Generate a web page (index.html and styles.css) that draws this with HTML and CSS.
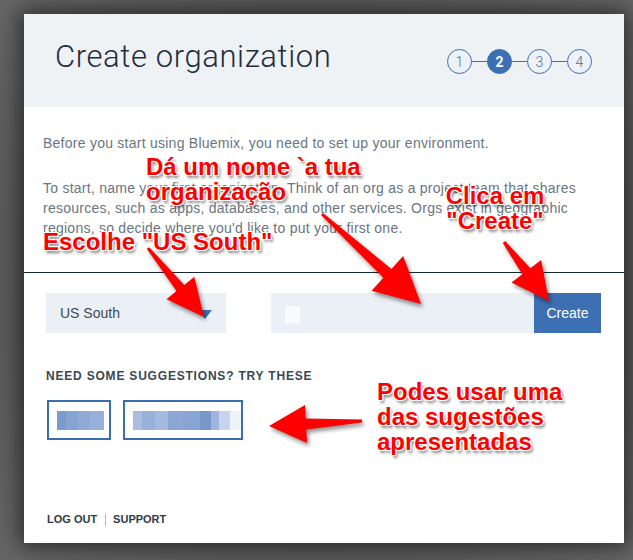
FILE: index.html
```html
<!DOCTYPE html>
<html lang="en">
<head>
<meta charset="utf-8">
<title>Create organization</title>
<link rel="stylesheet" href="styles.css">
</head>
<body>
<div class="modal">
  <header class="head">
    <h1 class="title">Create organization</h1>
    <div class="steps">
      <span class="step">1</span><span class="link"></span>
      <span class="step on">2</span><span class="link"></span>
      <span class="step">3</span><span class="link"></span>
      <span class="step">4</span>
    </div>
  </header>
  <section class="intro">
    <p>Before you start using Bluemix, you need to set up your environment.</p>
    <p>To start, name your first organization. Think of an org as a project team that shares resources, such as apps, databases, and other services. Orgs exist in geographic regions, so decide where you'd like to put your first one.</p>
  </section>
  <div class="rule"></div>
  <div class="form-row">
    <div class="select">
      <span>US South</span>
      <svg class="caret" width="14" height="9" viewBox="0 0 14 9"><polygon points="0,0 14,0 7,9" fill="#3d70b2"/></svg>
    </div>
    <div class="name">
      <div class="name-input"><span class="blur"></span></div>
      <div class="create">Create</div>
    </div>
  </div>
  <section class="suggest">
    <h2 class="suggest-title">NEED SOME SUGGESTIONS? TRY THESE</h2>
    <div class="chips">
      <div class="chip chip-a"><span class="pix pix-a"></span></div>
      <div class="chip chip-b"><span class="pix pix-b"></span></div>
    </div>
  </section>
  <footer class="foot">
    <span>LOG OUT</span><span class="sep"></span><span>SUPPORT</span>
  </footer>
</div>

<div class="annot">
  <svg class="arrows" width="633" height="560" viewBox="0 0 633 560">
    <polygon fill="#ff0000" points="146.8,248.8 176.5,291.1 166.5,299.3 204,317 194.3,276.7 184.3,284.9 149.2,247.2"/>
    <polygon fill="#ff0000" points="321,215 383.4,277.8 371.6,290.7 421,304 403.2,256.1 391.4,269.0 323,213"/>
    <polygon fill="#ff0000" points="502.8,242.9 522.3,274.3 511.5,282.6 549,301 541.1,260 530.3,268.3 505.2,241.1"/>
    <polygon fill="#ff0000" points="362,419.5 305.7,418.6 305,405.1 269,426 307,443.1 306.3,429.6 362,422.5"/>
  </svg>
  <div class="note note-name">Dá um nome `a tua<br>organização</div>
  <div class="note note-create">Clica em<br>"Create"</div>
  <div class="note note-region">Escolhe "US South"</div>
  <div class="note note-suggest">Podes usar uma<br>das sugestões<br>apresentadas</div>
</div>
</body>
</html>
```

FILE: styles.css
```css
* { box-sizing: border-box; }

html, body { margin: 0; }

body {
  width: 633px;
  height: 560px;
  overflow: hidden;
  position: relative;
  padding: 14px 0 0 24px;
  background: radial-gradient(ellipse at 50% 50%, #4a4a4a 0%, #555 60%, #666 100%);
  font-family: "Liberation Sans", Arial, sans-serif;
}

.modal {
  width: 600px;
  height: 529px;
  background: #fff;
  display: flex;
  flex-direction: column;
  box-shadow: 0 0 20px 4px rgba(0, 0, 0, 0.55);
}

.head {
  height: 93px;
  flex: none;
  background: #eef2f5;
  display: flex;
  align-items: flex-start;
  justify-content: space-between;
  padding: 0 32px 0 31px;
}

.title {
  margin: 25px 0 0;
  font: 300 31px/36px Roboto, "Liberation Sans", sans-serif;
  letter-spacing: 0.6px;
  color: #1f2d3a;
}

.steps {
  display: flex;
  align-items: center;
  margin-top: 35px;
}

.step {
  width: 25px;
  height: 25px;
  border: 1.5px solid #3d70b2;
  border-radius: 50%;
  display: flex;
  align-items: center;
  justify-content: center;
  font: 300 14px/1 Roboto, "Liberation Sans", sans-serif;
  color: #3d70b2;
}

.step.on {
  background: #3d70b2;
  color: #fff;
  font-weight: 700;
}

.link {
  width: 15px;
  height: 1.5px;
  background: #3d70b2;
}

.intro {
  padding: 26px 0 0 19px;
}

.intro p {
  margin: 0;
  max-width: 560px;
  font-size: 14px;
  line-height: 20px;
  letter-spacing: 0.25px;
  color: #6a757f;
}

.intro p + p { margin-top: 25px; }

.rule {
  height: 1px;
  margin-top: 34px;
  background: #152935;
  flex: none;
}

.form-row {
  display: flex;
  gap: 45px;
  padding: 20px 23px 0 22px;
}

.select {
  width: 180px;
  height: 40px;
  background: #ebf0f7;
  display: flex;
  align-items: center;
  justify-content: space-between;
  padding: 0 14px;
  font-size: 14px;
  color: #3d4a55;
}

.caret { display: block; margin-top: 2px; }

.name {
  flex: 1;
  display: flex;
  height: 40px;
}

.name-input {
  flex: 1;
  background: #ebf0f7;
  display: flex;
  align-items: center;
  padding-left: 14px;
}

.blur {
  width: 15px;
  height: 17px;
  background: #f8fafd;
  margin-top: 2px;
}

.create {
  width: 67px;
  background: #3d70b2;
  color: #fff;
  font-size: 14px;
  display: flex;
  align-items: center;
  justify-content: center;
}

.suggest {
  padding: 36px 0 0 22px;
}

.suggest-title {
  margin: 0;
  font: 700 12px/14px "Liberation Sans", Arial, sans-serif;
  letter-spacing: 0.8px;
  color: #3a4753;
}

.chips {
  display: flex;
  gap: 12px;
  margin-top: 17px;
  padding-left: 1px;
}

.chip {
  height: 40px;
  border: 2px solid #3d6db1;
  padding: 9px 0 0 8px;
}

.chip-a { width: 64px; }
.chip-b { width: 120px; }

.pix { display: block; height: 19px; }

.pix-a {
  width: 47px;
  background: linear-gradient(90deg, #7b9bcc 0 20%, #86a4d2 20% 45%, #8eaad6 45% 70%, #96b0da 70% 100%);
}

.pix-b {
  width: 108px;
  background: linear-gradient(90deg,
    #a9bde1 0 8%, #98b0da 8% 20%, #a6badf 20% 32%, #8da7d5 32% 46%,
    #8aa4d3 46% 62%, #7897c9 62% 72%, #9fb4dc 72% 80%, #c8d4eb 80% 90%, #eef2f9 90% 100%);
}

.foot {
  margin-top: auto;
  padding: 0 0 17px 23px;
  display: flex;
  align-items: center;
  font: 700 11px/13px "Liberation Sans", Arial, sans-serif;
  color: #2d3b47;
}

.sep {
  width: 1px;
  height: 12px;
  background: #a9b6c1;
  margin: 0 7px 0 8px;
}

.annot {
  position: absolute;
  left: 0;
  top: 0;
  width: 633px;
  height: 560px;
  pointer-events: none;
}

.arrows {
  position: absolute;
  left: 0;
  top: 0;
  filter: drop-shadow(2px 3px 2px rgba(0, 0, 0, 0.45));
}

.note {
  position: absolute;
  white-space: nowrap;
  font: 700 24px/25px "Liberation Sans", Arial, sans-serif;
  color: #ff0000;
  text-shadow:
    -1px -1px 0 #fff, 1px -1px 0 #fff, -1px 1px 0 #fff, 1px 1px 0 #fff,
    0 -1px 0 #fff, 0 1px 0 #fff, -1px 0 0 #fff, 1px 0 0 #fff,
    2px 3px 3px rgba(0, 0, 0, 0.5);
}

.note-name { left: 146px; top: 154px; }
.note-create { left: 444px; top: 183px; width: 102px; text-align: center; }
.note-region { left: 43px; top: 229px; }
.note-suggest { left: 377px; top: 379px; }
```
